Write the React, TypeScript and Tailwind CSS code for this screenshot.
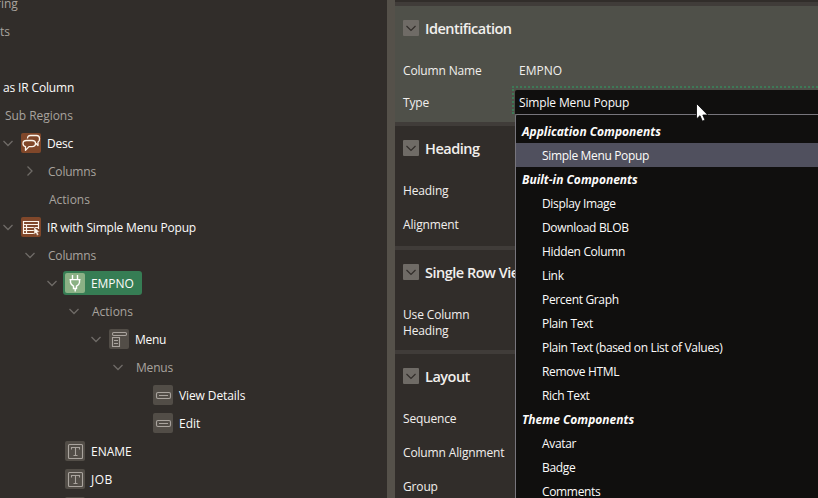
import React from "react";

type IconKind = "chat" | "report" | "plug" | "menu" | "button" | "text";

function Chevron({ open }: { open: boolean }) {
  return (
    <svg width="12" height="12" viewBox="0 0 12 12" fill="none" stroke="#6f6b67" strokeWidth="1.3">
      <path d={open ? "M1.5 4 L6 8.5 L10.5 4" : "M3.5 1.5 L8 6 L3.5 10.5"} />
    </svg>
  );
}

const tile: Record<IconKind, string> = {
  chat: "bg-[#80472a]",
  report: "bg-[#80472a]",
  plug: "bg-[#8bb185]",
  menu: "bg-[#524d47]",
  button: "bg-[#524d47]",
  text: "bg-[#524d47]",
};

function Glyph({ kind }: { kind: IconKind }) {
  return (
    <svg width="20" height="20" viewBox="0 0 20 20" fill="none" className={`shrink-0 rounded-[2px] ${tile[kind]}`}>
      {kind === "chat" && (
        <g stroke="#fcf5ec" strokeWidth="1.3" strokeLinejoin="round">
          <path d="M6.5 5.5 Q6.5 2.5 9.5 2.5 H15.5 Q18.5 2.5 18.5 5.5 V6 Q18.5 8.6 17 9.2 V12.5 L14.8 10.3" />
          <path d="M5.5 7.5 H11 Q14.5 7.5 14.5 10.5 Q14.5 13.6 11 13.6 H8 L4.5 17.4 V13.6 Q2 13.2 2 10.5 Q2 7.5 5.5 7.5 Z" />
        </g>
      )}
      {kind === "report" && (
        <g>
          <path
            d="M13 16.5 H2.5 V4.5 H17.5 V12 M2.5 7.5 H17.5 M2.5 10.5 H17.5 M2.5 13.5 H13 M5.5 7.5 V16.5"
            stroke="#fcf5ec"
            strokeWidth="1.2"
          />
          <path d="M13 10 L18.7 15 L16.5 15.2 L17.7 17.7 L16 18.4 L14.9 16 L13 17.4 Z" fill="#fcf5ec" stroke="#80472a" strokeWidth="0.4" />
        </g>
      )}
      {kind === "plug" && (
        <g stroke="#fff" strokeWidth="1.4">
          <path d="M7.5 2 V6.5 M12.5 2 V6.5 M4.5 6.6 H15.5 M5.5 7 V9.5 Q6 11.8 8.5 13.2 V15.5 H11.5 V13.2 Q14.2 11.8 14.5 9.5 V7 M10.2 15.5 V18.5" />
        </g>
      )}
      {kind === "menu" && (
        <g stroke="#aaa49e" strokeWidth="1.1">
          <rect x="3.5" y="3.5" width="14" height="3" rx="1.2" />
          <path d="M3.5 8.5 H10.5 V17.5 H3.5 Z M5 11.5 H9 M5 14.5 H9" />
        </g>
      )}
      {kind === "button" && (
        <g stroke="#aaa49e">
          <rect x="3.5" y="7.5" width="14" height="6" rx="1.5" strokeWidth="1.1" />
          <path d="M6 10.5 H15" strokeWidth="1" />
        </g>
      )}
      {kind === "text" && (
        <g stroke="#aaa49e" strokeWidth="1.1">
          <rect x="3.5" y="3.5" width="14" height="14" rx="1" />
          <path d="M6.5 8.5 V6.5 H14.5 V8.5 M10.5 6.5 V14.5 M8.5 14.5 H12.5" />
        </g>
      )}
    </svg>
  );
}

interface NodeProps {
  label: string;
  pad: string;
  icon?: IconKind;
  chevron?: "open" | "closed";
  muted?: boolean;
  selected?: boolean;
  tracking?: string;
}

function TreeRow({ label, pad, icon, chevron, muted, selected, tracking = "" }: NodeProps) {
  return (
    <div className={`flex h-7 shrink-0 items-center whitespace-nowrap ${pad}`}>
      {chevron && (
        <span className={icon ? "mr-[7px]" : "mr-3"}>
          <Chevron open={chevron === "open"} />
        </span>
      )}
      <div className={`flex items-center ${selected ? "-mx-0.5 h-6 rounded-[3px] bg-[#367d54] px-0.5 pr-2" : ""}`}>
        {icon && <Glyph kind={icon} />}
        <span className={`pt-0.5 font-medium ${icon ? "ml-1.5" : ""} ${muted ? "text-[#a8a39e]" : "text-[#fcfbfa]"} ${tracking}`}>
          {label}
        </span>
      </div>
    </div>
  );
}

const nodes: NodeProps[] = [
  { label: "ring", pad: "-ml-[4px]", muted: true },
  { label: "ts", pad: "", muted: true },
  { label: "", pad: "" },
  { label: "as IR Column", pad: "pl-[3px]", tracking: "tracking-[-0.15px]" },
  { label: "Sub Regions", pad: "pl-[5px]", muted: true, tracking: "tracking-[-0.05px]" },
  { label: "Desc", pad: "pl-[2px]", icon: "chat", chevron: "open", tracking: "tracking-[-0.25px]" },
  { label: "Columns", pad: "pl-[24px]", chevron: "closed", muted: true, tracking: "tracking-[-0.2px]" },
  { label: "Actions", pad: "pl-[49px]", muted: true },
  { label: "IR with Simple Menu Popup", pad: "pl-[2px]", icon: "report", chevron: "open", tracking: "tracking-[-0.19px]" },
  { label: "Columns", pad: "pl-[24px]", chevron: "open", muted: true, tracking: "tracking-[-0.2px]" },
  { label: "EMPNO", pad: "pl-[46px]", icon: "plug", chevron: "open", selected: true, tracking: "tracking-[-0.05px]" },
  { label: "Actions", pad: "pl-[68px]", chevron: "open", muted: true },
  { label: "Menu", pad: "pl-[90px]", icon: "menu", chevron: "open", tracking: "tracking-[-0.3px]" },
  { label: "Menus", pad: "pl-[112px]", chevron: "open", muted: true, tracking: "tracking-[-0.2px]" },
  { label: "View Details", pad: "pl-[153px]", icon: "button", tracking: "tracking-[-0.1px]" },
  { label: "Edit", pad: "pl-[153px]", icon: "button" },
  { label: "ENAME", pad: "pl-[65px]", icon: "text" },
  { label: "JOB", pad: "pl-[65px]", icon: "text", tracking: "tracking-[0.5px]" },
];

function Section({ title, className, children }: { title: string; className: string; children: React.ReactNode }) {
  return (
    <section className={`shrink-0 border-t-4 border-[#403c39] pl-2 ${className}`}>
      <div className="flex h-12 items-center whitespace-nowrap pb-1">
        <svg width="16" height="16" viewBox="0 0 16 16" fill="none" className="shrink-0 rounded-[1px] bg-[#6f6b66]">
          <path d="M3.5 6 L8 10.5 L12.5 6" stroke="#312d2a" strokeWidth="1.2" />
        </svg>
        <h2 className="ml-1.5 mt-0.5 text-[14.5px] font-semibold tracking-[-0.5px]">{title}</h2>
      </div>
      {children}
    </section>
  );
}

function Item({ group, children }: { group?: boolean; children: string }) {
  return (
    <li
      className={`h-6 whitespace-nowrap leading-[26px] ${
        group ? "pl-1.5 font-bold italic" : "pl-[26px] tracking-[-0.34px]"
      } ${children === "Simple Menu Popup" ? "bg-[#50505e]" : ""}`}
    >
      {children}
    </li>
  );
}

const groups = [
  { title: "Application Components", items: ["Simple Menu Popup"] },
  {
    title: "Built-in Components",
    items: ["Display Image", "Download BLOB", "Hidden Column", "Link", "Percent Graph", "Plain Text", "Plain Text (based on List of Values)", "Remove HTML", "Rich Text"],
  },
  { title: "Theme Components", items: ["Avatar", "Badge", "Comments"] },
];

export default function App() {
  return (
    <div className="relative flex h-[498px] w-[818px] overflow-hidden bg-[#312d2a] font-['Open_Sans','Noto_Sans',sans-serif] text-[12px] leading-4 text-[#f1efed]">
      <aside className="w-[387px] shrink-0 overflow-hidden">
        <div className="-mt-[11px] flex flex-col">
          {nodes.map((n, i) => (
            <TreeRow key={i} {...n} />
          ))}
          <div className="flex h-7 items-center pl-[65px]">
            <Glyph kind="text" />
          </div>
        </div>
      </aside>
      <div className="w-2 shrink-0 bg-[#55514a]" />
      <main className="flex min-w-0 flex-1 flex-col pt-0.5 font-medium tracking-[-0.15px]">
        <Section title="Identification" className="h-[120px] bg-[#4f5049]">
          <div className="flex h-8 items-center pt-0.5">
            <span className="w-[116px]">Column Name</span>
            <span className="tracking-normal">EMPNO</span>
          </div>
          <div className="flex h-8 items-start">
            <span className="w-[109px] pt-[9px]">Type</span>
            <div className="h-7 flex-1 border-l-2 border-t-2 border-dotted border-[#3d7a57] pl-px pt-[2px]">
              <div className="h-6 rounded-tl-[2px] bg-[#100f0e] pl-1 leading-[26px] text-[#fcfbfa]">Simple Menu Popup</div>
            </div>
          </div>
        </Section>
        <Section title="Heading" className="h-[124px]">
          <div className="flex h-[34px] items-center">Heading</div>
          <div className="flex h-[34px] items-center">Alignment</div>
        </Section>
        <Section title="Single Row View" className="h-[104px]">
          <div className="w-[90px] pt-[9px]">Use Column Heading</div>
        </Section>
        <Section title="Layout" className="h-[160px]">
          <div className="flex h-[34px] items-center">Sequence</div>
          <div className="flex h-[34px] items-center">Column Alignment</div>
          <div className="flex h-[34px] items-center">Group</div>
        </Section>
      </main>
      <ul className="absolute left-[515px] top-[114px] h-[400px] w-[304px] rounded-tl-[2px] border-l border-t border-[#77757c] bg-[#100f0e] pt-1 text-[#fcfbfa]">
        {groups.map((g) => (
          <React.Fragment key={g.title}>
            <Item group>{g.title}</Item>
            {g.items.map((t) => (
              <Item key={t}>{t}</Item>
            ))}
          </React.Fragment>
        ))}
      </ul>
      <svg className="absolute left-[696px] top-[103px]" width="13" height="20" viewBox="0 0 13 20">
        <path d="M0.5 0.5 V16 L4 12.7 L6.4 18.2 L9 17 L6.8 12 H11.8 Z" fill="#fff" stroke="#000" strokeWidth="0.8" />
      </svg>
    </div>
  );
}
